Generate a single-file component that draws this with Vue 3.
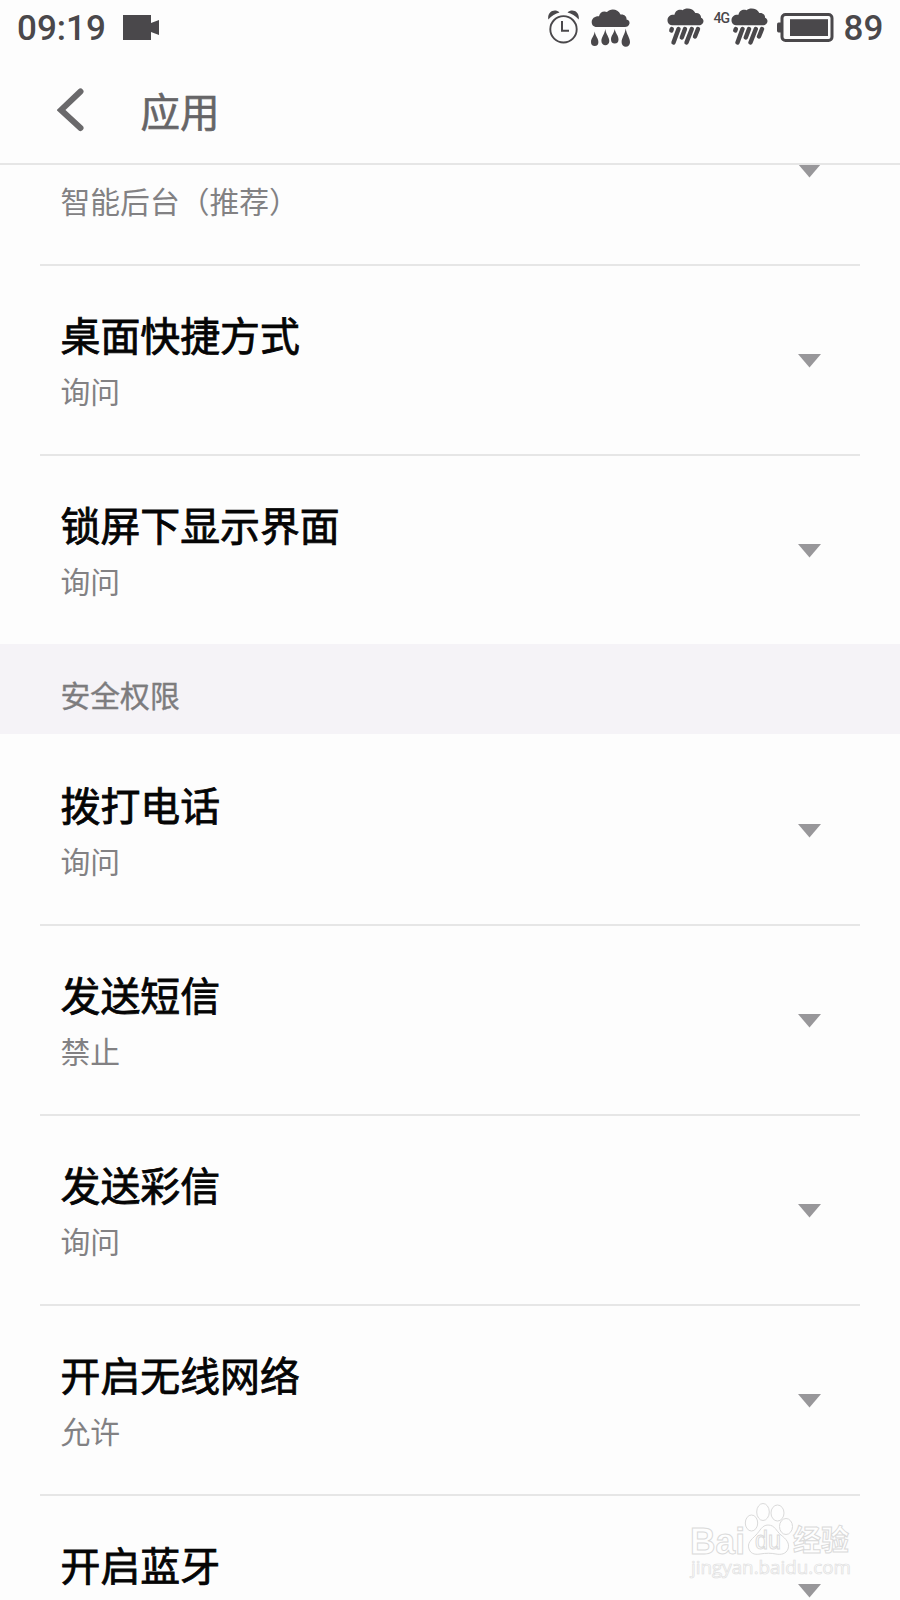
<script setup>
import { ref } from "vue";

const backgroundItems = ref([
  { name: "", value: "智能后台（推荐）" },
  { name: "桌面快捷方式", value: "询问" },
  { name: "锁屏下显示界面", value: "询问" },
]);

const safetyItems = ref([
  { name: "拨打电话", value: "询问" },
  { name: "发送短信", value: "禁止" },
  { name: "发送彩信", value: "询问" },
  { name: "开启无线网络", value: "允许" },
  { name: "开启蓝牙", value: "" },
]);

const groups = ref([
  { title: "", items: backgroundItems.value },
  { title: "安全权限", items: safetyItems.value },
]);
</script>

<template>
  <div class="screen" lang="zh-CN">
    <!-- status bar -->
    <div class="status-bar">
      <span class="clock">09:19</span>
      <svg class="camera" width="36" height="26" viewBox="0 0 36 26">
        <path d="M0 0H28V8L36 5V20L28 17V25H0Z" />
      </svg>
      <svg class="alarm" width="32" height="36" viewBox="0 0 32 36">
        <circle cx="15.5" cy="20.3" r="13.2" class="line" />
        <path d="M14 12V21.7H21" class="line hands" />
        <path d="M.3 10.5C-1 3 6.500 -1 11.500 3.500C7.500 4.500 3.500 7 .3 10.500Z" />
        <path d="M30.700 10.500C32 3 24.500 -1 19.500 3.500C23.500 4.500 27.500 7 30.700 10.500Z" />
      </svg>
      <svg class="rain" width="40" height="40" viewBox="0 0 40 40">
        <path d="M6 18C2 18 .7 15.500 .7 13C.7 9.500 4 7 8 7.300C8.500 3.500 12.500 1.300 16 3C19 -.8 27 -.5 29.500 5.500C33.500 4.800 36 8 35.500 10.500C38 11 38.800 13 38.500 14.500C38 17 36 18 34 18Z" />
        <path d="M3.700 22.500C4.500 27.500 7.400 29 7.400 33A3.600 4 0 0 1 0 33C0 29 3 27.500 3.700 22.500Z" />
        <path d="M14.300 20C15 25.500 18.300 28 18.300 32A3.900 4.300 0 0 1 10.400 32C10.400 28 13.500 25.500 14.300 20Z" />
        <path d="M23.700 20C24.500 24.500 27.500 26.500 27.500 30.500A3.700 4 0 0 1 20 30.500C20 26.500 23 24.500 23.700 20Z" />
        <path d="M34.700 19.500C35.500 25.500 39 28.500 39 33.200A4.200 4.600 0 0 1 30.600 33.200C30.600 28.500 34 25.500 34.700 19.500Z" />
      </svg>
      <svg class="shower" width="37" height="38" viewBox="0 0 37 38">
        <path id="cloud" d="M5 17.300C1.500 17 .3 14.500 .5 11.800C.7 8.500 3.500 6.300 7.500 6.800C8 3 12 .8 15.500 2.300C18.500 -.8 26 -.3 28.300 5C32 4.500 34.500 7.300 34 9.800C36.500 10.800 37 13 36 15C35 16.800 33.500 17.300 32 17.300Z" />
        <path id="streaks" d="M4.800 21L4.300 22.500M11.500 21L6.500 34.500M18 21L14.800 29.500M24.800 21L19.500 34.500M31 21L28 28.500" class="streak" />
      </svg>
      <span class="network">4G</span>
      <svg class="shower second" width="37" height="38" viewBox="0 0 37 38">
        <use href="#cloud" />
        <use href="#streaks" />
      </svg>
      <svg class="battery" width="57" height="30" viewBox="0 0 57 30">
        <rect x="5" y="1.500" width="50" height="26" rx="3.500" class="case" />
        <rect x="13" y="6.200" width="38" height="16.800" />
        <path d="M4 9.500H1.500Q0 9.500 0 11.500V17.500Q0 19.500 1.500 19.500H4Z" />
      </svg>
      <span class="level">89</span>
    </div>

    <!-- title bar -->
    <header class="title-bar">
      <svg class="back" width="28" height="44" viewBox="0 0 28 44">
        <path d="M23.500 3.500L4 22L23.500 40" />
      </svg>
      <h1>应用</h1>
    </header>

    <!-- settings list, first row is scrolled under the title bar -->
    <main class="list">
      <section v-for="(group, index) in groups" :key="index" class="group">
        <h2 v-if="group.title" class="group-title">{{ group.title }}</h2>
        <div v-for="item in group.items" :key="item.name" class="item">
          <div class="item-text">
            <div class="item-name">{{ item.name }}</div>
            <div class="item-value">{{ item.value }}</div>
          </div>
          <svg class="arrow" width="23" height="14" viewBox="0 0 23 14">
            <path d="M0 0H23L11.500 13.500Z" />
          </svg>
        </div>
      </section>
    </main>

    <!-- watermark -->
    <svg class="watermark" width="180" height="84" viewBox="0 0 180 84">
      <text x="10" y="53.500" class="brand" textLength="55" lengthAdjust="spacingAndGlyphs">Bai</text>
      <g class="paw">
        <ellipse cx="71.500" cy="23" rx="6.200" ry="8" />
        <ellipse cx="83" cy="12" rx="6.300" ry="8.500" />
        <ellipse cx="97.500" cy="13" rx="6.500" ry="8" />
        <ellipse cx="106" cy="26.500" rx="6.500" ry="8" />
        <path d="M88 25C82 25 80 31 76 35C71 40 67 43 69 49C71 55 77 54.500 80 54C86 53 91 53 96 54C101 55 106 54 108 49C110 43 106 39 101 35C96 31 95 25 88 25Z" />
      </g>
      <text x="75" y="49" class="du" textLength="26" lengthAdjust="spacingAndGlyphs">du</text>
      <text x="113" y="51" class="cn" textLength="56" lengthAdjust="spacingAndGlyphs">经验</text>
      <text x="11" y="74" class="site" textLength="160" lengthAdjust="spacingAndGlyphs">jingyan.baidu.com</text>
    </svg>
  </div>
</template>

<style>
body {
  margin: 0;
  background: #fdfdfd;
}
</style>

<style scoped>
.screen {
  position: relative;
  display: flex;
  flex-direction: column;
  width: 900px;
  height: 1600px;
  overflow: hidden;
  background: #fdfdfd;
  font-family: "Noto Sans CJK SC", sans-serif;
}

/* status bar */
.status-bar {
  display: flex;
  flex: none;
  align-items: flex-start;
  box-sizing: border-box;
  height: 56px;
  padding-left: 17px;
  color: #4a484b;
  fill: #4a484b;
  font-family: Roboto, sans-serif;
}

.status-bar svg {
  flex: none;
}

.clock,
.level {
  font-size: 35px;
  font-weight: 500;
  line-height: 40px;
  margin-top: 9px;
  white-space: nowrap;
}

.clock {
  width: 106px;
}

.camera {
  margin-top: 15px;
}

.alarm {
  margin-top: 9px;
  margin-left: 389px;
}

.line {
  fill: none;
  stroke: #4a484b;
  stroke-width: 1.9;
}

.hands {
  stroke-width: 2;
}

.rain {
  margin-top: 9px;
  margin-left: 11px;
}

.shower {
  margin-top: 8px;
  margin-left: 35.5px;
}

.shower.second {
  margin-left: 0.5px;
}

.streak {
  fill: none;
  stroke: #4a484b;
  stroke-width: 4.4;
  stroke-linecap: round;
}

.network {
  width: 17px;
  margin-top: 10px;
  margin-left: 10px;
  font-size: 14px;
  font-weight: 500;
  line-height: 16px;
  letter-spacing: -1px;
}

.battery {
  margin-top: 13px;
  margin-left: 8.5px;
}

.case {
  fill: none;
  stroke: #4a484b;
  stroke-width: 3;
}

.level {
  margin-left: 10px;
}

/* title bar */
.title-bar {
  display: flex;
  flex: none;
  align-items: center;
  box-sizing: border-box;
  height: 109px;
  padding-left: 57px;
  border-bottom: 2px solid #e6e6e6;
}

.back {
  fill: none;
  stroke: #6a696b;
  stroke-width: 6;
  stroke-linecap: round;
}

.title-bar h1 {
  margin: 0 0 0 55.5px;
  color: #666567;
  font-size: 39.5px;
  font-weight: 400;
  line-height: 56px;
  -webkit-text-stroke: 0.6px #666567;
}

/* list */
.list {
  flex: 1;
  overflow: hidden;
}

.group:first-child {
  margin-top: -91px;
}

.group-title {
  box-sizing: border-box;
  height: 90px;
  margin: 0;
  padding: 11px 60.5px 0;
  background: #f5f3f7;
  color: #7d7c7e;
  font-size: 29.8px;
  font-weight: 400;
  line-height: 78px;
  -webkit-text-stroke: 0.4px #7d7c7e;
}

.item {
  display: flex;
  justify-content: space-between;
  box-sizing: border-box;
  height: 190px;
  margin: 0 40px;
  padding: 0 39px 0 20.5px;
  border-top: 2px solid #e6e6e6;
}

.group-title + .item {
  border-top-color: transparent;
}

.item-text {
  padding-top: 39px;
}

.item-name {
  min-height: 58px;
  color: #050505;
  font-size: 39.9px;
  line-height: 58px;
  -webkit-text-stroke: 0.8px #050505;
}

.item-value {
  margin-top: 5px;
  color: #828183;
  font-size: 29.8px;
  line-height: 44px;
}

.arrow {
  margin-top: 88px;
  fill: #98979a;
}

/* watermark */
.watermark {
  position: absolute;
  left: 680px;
  top: 1500px;
  fill: #fefefe;
  stroke: #dadada;
  stroke-width: 1;
}

.brand {
  font-family: "Liberation Sans", sans-serif;
  font-size: 37px;
  font-weight: 700;
}

.du {
  font-family: "Liberation Sans", sans-serif;
  font-size: 25px;
}

.cn {
  font-family: "Noto Sans CJK SC", sans-serif;
  font-size: 29px;
  font-weight: 700;
}

.site {
  font-family: "Open Sans", sans-serif;
  font-size: 19px;
  stroke: #e0e0e0;
  stroke-width: 0.7;
}
</style>
